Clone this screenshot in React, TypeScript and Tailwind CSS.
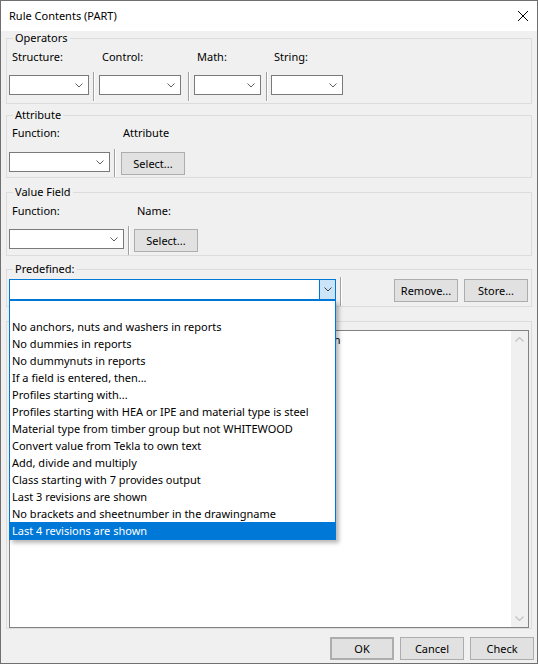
import React from "react";

function ChevronDown({ color = "#606060" }: { color?: string }) {
  return (
    <svg width="8" height="5" viewBox="0 0 8 5" className="block">
      <path d="M0.5 0.5 L4 4 L7.5 0.5" fill="none" stroke={color} strokeWidth="1" />
    </svg>
  );
}

function ChevronUp({ color = "#c2c2c2" }: { color?: string }) {
  return (
    <svg width="9" height="5" viewBox="0 0 9 5" className="block">
      <path d="M0.5 4.5 L4.5 0.5 L8.5 4.5" fill="none" stroke={color} strokeWidth="1.2" />
    </svg>
  );
}

function Combo({ className }: { className: string }) {
  return (
    <div className={`h-[20px] bg-white border border-[#7a7a7a] flex items-center justify-end pr-[5px] ${className}`}>
      <ChevronDown />
    </div>
  );
}

function Sep({ className }: { className: string }) {
  return <div className={`w-[2px] border-l border-l-[#a0a0a0] border-r border-r-white ${className}`} />;
}

function Btn({ children, className = "" }: { children: React.ReactNode; className?: string }) {
  return (
    <div className={`h-[23px] w-[64px] bg-[#e1e1e1] border border-[#adadad] flex items-center justify-center leading-[16px] ${className}`}>
      {children}
    </div>
  );
}

const items = [
  "\u00a0",
  "No anchors, nuts and washers in reports",
  "No dummies in reports",
  "No dummynuts in reports",
  "If a field is entered, then...",
  "Profiles starting with...",
  "Profiles starting with HEA or IPE and material type is steel",
  "Material type from timber group but not WHITEWOOD",
  "Convert value from Tekla to own text",
  "Add, divide and multiply",
  "Class starting with 7 provides output",
  "Last 3 revisions are shown",
  "No brackets and sheetnumber in the drawingname",
  "Last 4 revisions are shown",
];

export default function App() {
  return (
    <div className="w-[538px] h-[664px] border border-[#707070] bg-[#f0f0f0] flex flex-col text-[11px] text-black font-['Noto_Sans','DejaVu_Sans',sans-serif] overflow-hidden">
      {/* Title bar */}
      <div className="h-[30px] shrink-0 bg-white flex items-center justify-between pl-[8px] pr-[9px]">
        <span className="leading-[16px]">Rule Contents (PART)</span>
        <svg width="10" height="10" viewBox="0 0 10 10" className="block">
          <path d="M0 0 L10 10 M10 0 L0 10" stroke="#000" strokeWidth="1" />
        </svg>
      </div>

      <div className="flex flex-col px-[5px]">
        {/* Operators */}
        <fieldset className="border border-[#dcdcdc] pb-[2px]">
          <legend className="ml-[6px] px-[2px] leading-[14px]">Operators</legend>
          <div className="flex items-start mt-[4px]">
            <div className="flex flex-col ml-[2px]">
              <div className="leading-[16px] pl-[3px]">Structure:</div>
              <Combo className="mt-[10px] w-[80px]" />
            </div>
            <Sep className="ml-[4px] mt-[23px] h-[29px]" />
            <div className="flex flex-col ml-[4px]">
              <div className="leading-[16px] pl-[3px]">Control:</div>
              <Combo className="mt-[10px] w-[82px]" />
            </div>
            <Sep className="ml-[7px] mt-[23px] h-[29px]" />
            <div className="flex flex-col ml-[4px]">
              <div className="leading-[16px] pl-[3px]">Math:</div>
              <Combo className="mt-[10px] w-[67px]" />
            </div>
            <Sep className="ml-[5px] mt-[23px] h-[29px]" />
            <div className="flex flex-col ml-[3px]">
              <div className="leading-[16px] pl-[3px]">String:</div>
              <Combo className="mt-[10px] w-[72px]" />
            </div>
          </div>
        </fieldset>

        {/* Attribute */}
        <fieldset className="mt-[4px] border border-[#dcdcdc]">
          <legend className="ml-[6px] px-[2px] leading-[14px]">Attribute</legend>
          <div className="flex items-start mt-[3px]">
            <div className="flex flex-col ml-[2px]">
              <div className="leading-[16px] pl-[3px]">Function:</div>
              <Combo className="mt-[11px] w-[101px]" />
            </div>
            <Sep className="ml-[4px] mt-[24px] h-[28px]" />
            <div className="flex flex-col ml-[5px]">
              <div className="leading-[16px] pl-[2px]">Attribute</div>
              <Btn className="mt-[11px]">Select...</Btn>
            </div>
          </div>
        </fieldset>

        {/* Value Field */}
        <fieldset className="mt-[7px] border border-[#dcdcdc]">
          <legend className="ml-[6px] px-[2px] leading-[14px]">Value Field</legend>
          <div className="flex items-start mt-[4px]">
            <div className="flex flex-col ml-[2px]">
              <div className="leading-[16px] pl-[3px]">Function:</div>
              <Combo className="mt-[10px] w-[115px]" />
            </div>
            <Sep className="ml-[4px] mt-[23px] h-[29px]" />
            <div className="flex flex-col ml-[4px]">
              <div className="leading-[16px] pl-[3px]">Name:</div>
              <Btn className="mt-[10px]">Select...</Btn>
            </div>
          </div>
        </fieldset>

        {/* Predefined */}
        <fieldset className="mt-[6px] border border-[#dcdcdc] relative z-10">
          <legend className="ml-[6px] px-[2px] leading-[14px]">Predefined:</legend>
          <div className="flex items-start mt-[1px]">
            <div className="relative ml-[2px] mt-[2px] w-[327px] h-[21px] bg-white border border-[#0078d7] flex">
              <div className="flex-1" />
              <div className="w-[16px] border-l border-[#0078d7] bg-[#cce4f7] flex items-center justify-center">
                <ChevronDown color="#404040" />
              </div>
              {/* Dropdown list */}
              <div className="absolute left-[-1px] top-[20px] w-[327px] h-[240px] bg-white border border-[#0078d7] shadow-[3px_3px_4px_rgba(0,0,0,0.28)] flex flex-col">
                {items.map((t, i) => (
                  <div
                    key={i}
                    className={
                      i === items.length - 1
                        ? "h-[17px] leading-[17px] pl-[2px] whitespace-nowrap bg-[#0078d7] text-white"
                        : "h-[17px] leading-[17px] pl-[2px] whitespace-nowrap"
                    }
                  >
                    {t}
                  </div>
                ))}
              </div>
            </div>
            <Sep className="ml-[4px] h-[29px]" />
            <Btn className="ml-[52px] mt-[2px]">Remove...</Btn>
            <Btn className="ml-[6px] mt-[2px]">Store...</Btn>
          </div>
        </fieldset>

        {/* Rule text */}
        <div className="mt-[14px] border border-[#dcdcdc] pt-[8px] px-[2px]">
          <div className="h-[298px] bg-white border border-[#828282] flex">
            <div className="flex-1 overflow-hidden pl-[2px] pt-[1px] leading-[16px] whitespace-nowrap">
              Shows the last four revisions of the drawings in the title block in
            </div>
            <div className="w-[17px] bg-[#f0f0f0] flex flex-col justify-between items-center py-[6px]">
              <ChevronUp />
              <div className="rotate-180">
                <ChevronUp />
              </div>
            </div>
          </div>
        </div>
      </div>

      {/* Buttons */}
      <div className="mt-[8px] flex justify-end gap-[6px] pr-[3px]">
        <Btn className="border-2 border-[#0078d7]">OK</Btn>
        <Btn>Cancel</Btn>
        <Btn>Check</Btn>
      </div>
    </div>
  );
}
